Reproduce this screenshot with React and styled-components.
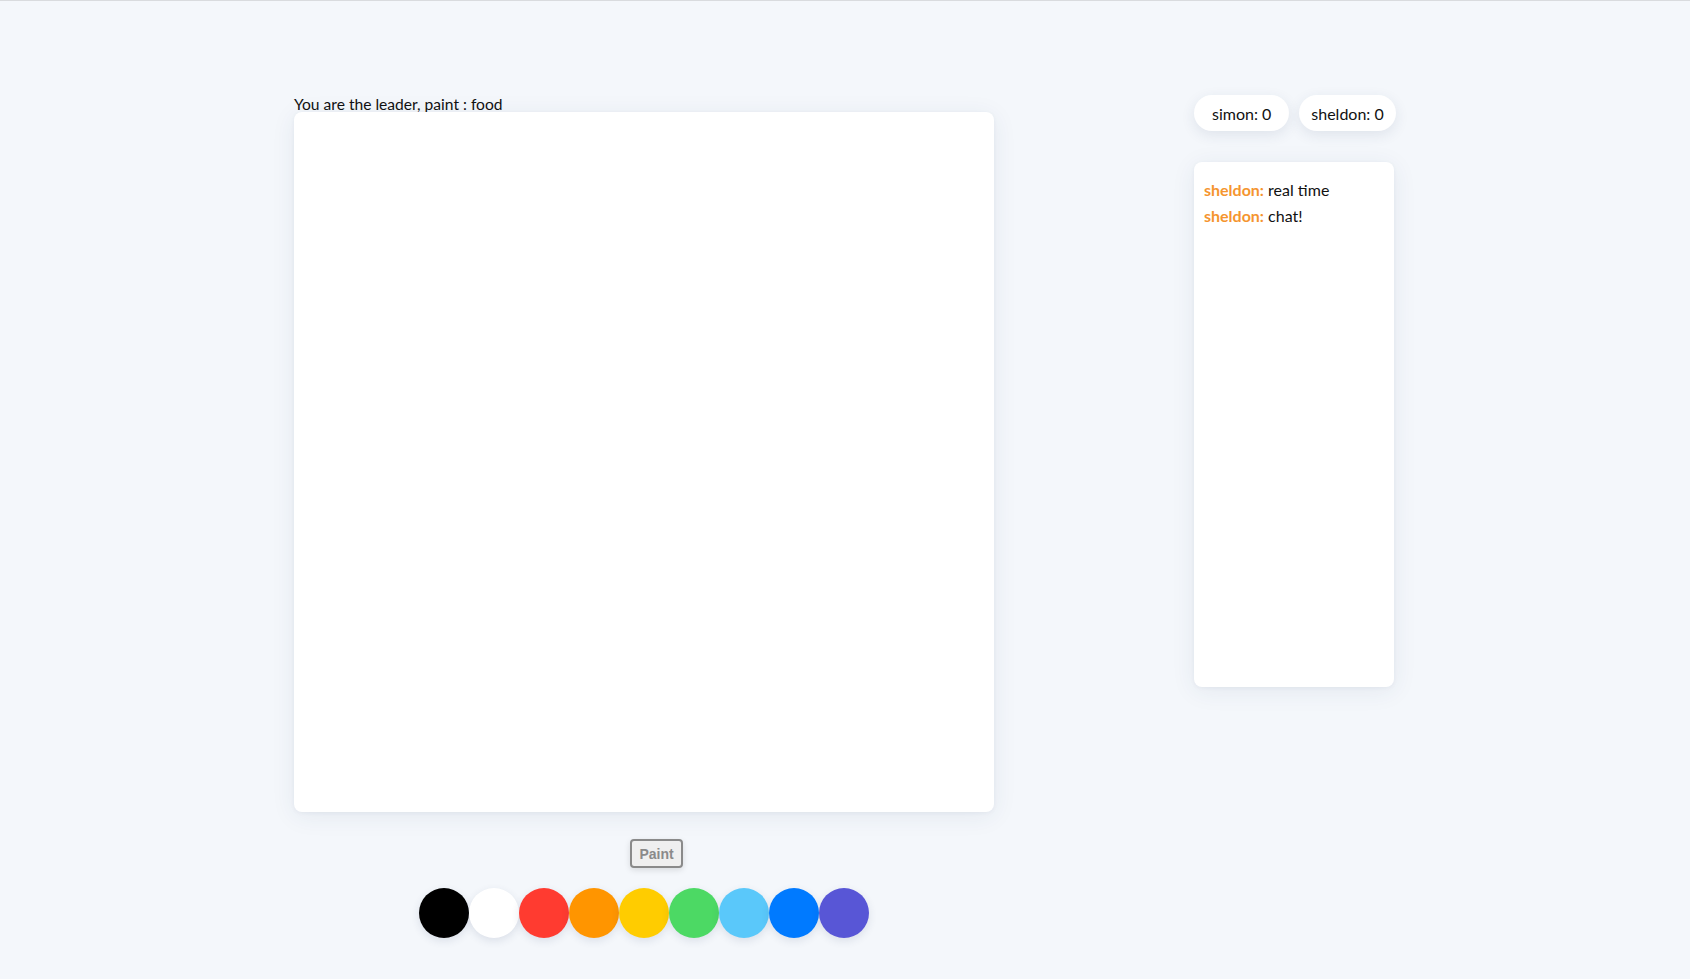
import React from "react";
import styled, { createGlobalStyle } from "styled-components";

const Global = createGlobalStyle`
  html, body { margin: 0; padding: 0; }
  body {
    background: #f4f7fb;
    font-family: Lato, "Open Sans", sans-serif;
    color: #111;
    border-top: 1px solid #d9dbde;
    min-height: 978px;
  }
`;

const Page = styled.div`
  display: flex;
  justify-content: center;
  align-items: flex-start;
  gap: 200px;
  padding-top: 89px;
  padding-right: 2px;
`;

const Board = styled.div`
  width: 700px;
  display: flex;
  flex-direction: column;
`;

const Prompt = styled.div`
  font-size: 15.6px;
  line-height: 16px;
  padding-top: 6px;
  color: #111;
  white-space: nowrap;
`;

const Canvas = styled.div`
  width: 700px;
  height: 700px;
  background: #fff;
  border-radius: 8px;
  box-shadow: 0 4px 24px rgba(40, 60, 100, 0.08), 0 1px 4px rgba(40, 60, 100, 0.05);
`;

const Toolbar = styled.div`
  display: flex;
  justify-content: center;
  padding-left: 25px;
  margin-top: 27px;
`;

const PaintButton = styled.button`
  width: 53px;
  height: 29px;
  font-family: "Liberation Sans", Arial, sans-serif;
  font-weight: bold;
  font-size: 14px;
  color: #8a8a8a;
  background: #efefef;
  border: 2px solid #8a8a8a;
  border-radius: 4px;
  padding: 0;
  box-shadow: 0 2px 6px rgba(0, 0, 0, 0.12);
`;

const Palette = styled.div`
  display: flex;
  justify-content: center;
  margin-top: 20px;
`;

const Swatch = styled.div`
  width: 50px;
  height: 50px;
  border-radius: 50%;
  background: ${(p) => p.$color};
  box-shadow: 0 3px 8px rgba(40, 60, 100, 0.12);
`;

const Side = styled.div`
  width: 200px;
  display: flex;
  flex-direction: column;
  gap: 31px;
  margin-top: 5px;
`;

const Scores = styled.div`
  display: flex;
  gap: 10px;
`;

const Pill = styled.div`
  height: 36px;
  padding: 0 ${(p) => p.$pad || 18}px;
  border-radius: 18px;
  background: #fff;
  display: flex;
  align-items: center;
  justify-content: center;
  font-size: 16px;
  color: #111;
  box-shadow: 0 4px 14px rgba(40, 60, 100, 0.1);
  white-space: nowrap;
`;

const Chat = styled.div`
  height: 525px;
  background: #fff;
  border-radius: 8px;
  box-shadow: 0 4px 24px rgba(40, 60, 100, 0.08), 0 1px 4px rgba(40, 60, 100, 0.05);
  padding: 18px 10px;
  box-sizing: border-box;
  display: flex;
  flex-direction: column;
  gap: 7px;
`;

const Message = styled.div`
  font-size: 16px;
  line-height: 19px;
  color: #111;
`;

const Author = styled.span`
  color: #f5952f;
  font-weight: 700;
`;

const colors = [
  "#000000",
  "#ffffff",
  "#ff3b30",
  "#ff9500",
  "#ffcc00",
  "#4cd964",
  "#5ac8fa",
  "#007aff",
  "#5856d6",
];

export default function App() {
  return (
    <>
      <Global />
      <Page>
        <Board>
          <Prompt>You are the leader, paint : food</Prompt>
          <Canvas />
          <Toolbar>
            <PaintButton disabled>Paint</PaintButton>
          </Toolbar>
          <Palette>
            {colors.map((c) => (
              <Swatch key={c} $color={c} />
            ))}
          </Palette>
        </Board>
        <Side>
          <Scores>
            <Pill>simon: 0</Pill>
            <Pill $pad={12}>sheldon: 0</Pill>
          </Scores>
          <Chat>
            <Message>
              <Author>sheldon:</Author> real time
            </Message>
            <Message>
              <Author>sheldon:</Author> chat!
            </Message>
          </Chat>
        </Side>
      </Page>
    </>
  );
}
